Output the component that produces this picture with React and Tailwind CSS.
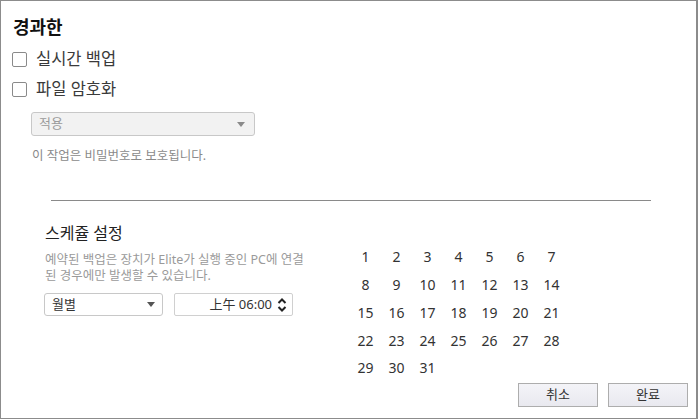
import React from "react";

const font = { fontFamily: '"Noto Sans", "Noto Sans CJK KR", sans-serif' };

const days = Array.from({ length: 31 }, (_, i) => i + 1);

const Caret = ({ color = "#777" }) => (
  <svg width="8" height="5" viewBox="0 0 8 5">
    <path d="M0 0 L8 0 L4 5 Z" fill={color} />
  </svg>
);

const Checkbox = ({ label }) => (
  <label className="flex h-[30px] items-center">
    <span className="ml-[11px] h-[15px] w-[15px] rounded-[2px] border border-[#8a8a8a] bg-white" />
    <span className="ml-[9px] text-[16.5px] leading-[20px] text-[#3a3a3a]">{label}</span>
  </label>
);

export default function App() {
  return (
    <div style={font} className="h-[420px] w-[700px] bg-white">
      <div className="flex h-[419px] w-[698px] flex-col border border-[#8c8c8c] border-r-2">
        <h1 className="ml-[12px] mt-[14px] text-[18px] font-bold leading-[24px] text-[#111]">경과한</h1>

        <div className="mt-[5px]">
          <Checkbox label="실시간 백업" />
          <Checkbox label="파일 암호화" />
        </div>

        <div className="ml-[30px] mt-[8px] flex h-[24px] w-[224px] items-center justify-between rounded-[3px] border border-[#c8c8c8] bg-[#f2f2f2] pl-[7px] pr-[9px]">
          <span className="text-[13px] text-[#9a9a9a]">적용</span>
          <Caret color="#8a8a8a" />
        </div>

        <p className="ml-[31px] mt-[12px] text-[12.5px] leading-[16px] text-[#8a8a8a]">이 작업은 비밀번호로 보호됩니다.</p>

        <div className="ml-[50px] mt-[36px] h-px w-[600px] bg-[#8a8a8a]" />

        <div className="mt-[22px] flex">
          <div className="ml-[43px] w-[306px]">
            <h2 className="ml-[1px] text-[16px] leading-[20px] text-[#222]">스케쥴 설정</h2>
            <p className="ml-[1px] mt-[9px] text-[12.5px] leading-[16px] text-[#9a9a9a]">
              예약된 백업은 장치가 Elite가 실행 중인 PC에 연결
              <br />
              된 경우에만 발생할 수 있습니다.
            </p>
            <div className="mt-[9px] flex gap-[11px]">
              <div className="flex h-[23px] w-[119px] items-center justify-between rounded-[3px] border border-[#c8c8c8] bg-white pl-[7px] pr-[7px]">
                <span className="text-[13px] text-[#333]">월별</span>
                <Caret color="#555" />
              </div>
              <div className="flex h-[23px] w-[119px] items-center justify-end rounded-[2px] border border-[#d0d0d0] bg-white pr-[5px]">
                <span className="text-[13px] text-[#333]">上午 06:00</span>
                <svg className="ml-[5px]" width="10" height="14" viewBox="0 0 10 14">
                  <path d="M1.5 5 L5 1.5 L8.5 5" fill="none" stroke="#222" strokeWidth="2" />
                  <path d="M1.5 9 L5 12.5 L8.5 9" fill="none" stroke="#222" strokeWidth="2" />
                </svg>
              </div>
            </div>
          </div>

          <div className="mt-[20px] grid grid-cols-[repeat(7,31px)] auto-rows-[27.75px]">
            {days.map((d) => (
              <div key={d} className="flex items-center justify-center text-[14px] text-[#333]">
                {d}
              </div>
            ))}
          </div>
        </div>

        <div className="mt-auto mb-[11px] mr-[8px] flex justify-end gap-[10px]">
          <button className="h-[24px] w-[80px] border border-[#adadad] bg-gradient-to-b from-[#f4f4f8] to-[#e9e9ef] text-[13px] text-[#333]">
            취소
          </button>
          <button className="h-[24px] w-[80px] border border-[#adadad] bg-gradient-to-b from-[#f4f4f8] to-[#e9e9ef] text-[13px] text-[#333]">
            완료
          </button>
        </div>
      </div>
    </div>
  );
}
